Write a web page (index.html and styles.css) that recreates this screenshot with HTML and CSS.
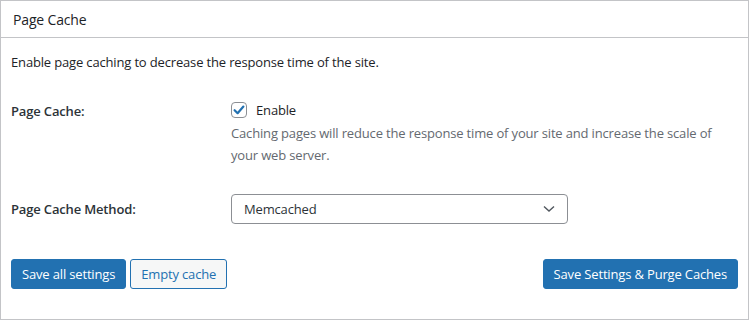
FILE: index.html
```html
<!DOCTYPE html>
<html>
<head>
<meta charset="utf-8">
<link rel="stylesheet" href="styles.css">
</head>
<body>
<div class="postbox">
  <h3 class="hndle">Page Cache</h3>
  <div class="inside">
    <p class="intro">Enable page caching to decrease the response time of the site.</p>
    <div class="row row-cache">
      <div class="label">Page Cache:</div>
      <div class="field">
        <label class="check">
          <span class="box">
            <svg width="16" height="16" viewBox="0 0 16 16"><path d="M3.6 8.2 L6.6 11.2 L12.4 4.6" fill="none" stroke="#2271b1" stroke-width="2.2" stroke-linecap="round" stroke-linejoin="round"/></svg>
          </span>
          <span>Enable</span>
        </label>
        <p class="desc">Caching pages will reduce the response time of your site and increase the scale of your web server.</p>
      </div>
    </div>
    <div class="row row-method">
      <div class="label">Page Cache Method:</div>
      <div class="field">
        <div class="select">
          <span>Memcached</span>
          <svg width="12" height="8" viewBox="0 0 12 8"><path d="M1 1.5 L6 6 L11 1.5" fill="none" stroke="#50575e" stroke-width="1.4"/></svg>
        </div>
      </div>
    </div>
    <div class="actions">
      <div class="left">
        <button class="btn primary">Save all settings</button>
        <button class="btn secondary">Empty cache</button>
      </div>
      <button class="btn primary">Save Settings &amp; Purge Caches</button>
    </div>
  </div>
</div>
</body>
</html>
```

FILE: styles.css
```css
* { box-sizing: border-box; }
html, body { margin: 0; padding: 0; background: #fff; }
body {
  font-family: "Open Sans", "Noto Sans", sans-serif;
  font-size: 13px;
  letter-spacing: -0.16px;
  color: #1d2327;
}
.postbox {
  width: 749px;
  height: 320px;
  border: 1px solid #c3c4c7;
  background: #fff;
}
.hndle {
  margin: 0;
  height: 37px;
  padding: 0 12px;
  display: flex;
  align-items: center;
  font-size: 14px;
  font-weight: 400;
  border-bottom: 1px solid #c3c4c7;
}
.inside { padding: 0 10px 0 10px; }
.intro { margin: 14px 0 0 0; line-height: 20px; }
.row { display: flex; }
.label { width: 220px; font-weight: 600; line-height: 20px; color: #2c3338; }
.field { flex: 1; }
.row-cache { margin-top: 28px; }
.row-cache .label { padding-top: 1px; }
.check { display: flex; align-items: center; gap: 9px; line-height: 20px; }
.box {
  width: 16px; height: 16px;
  border: 1px solid #8c8f94;
  border-radius: 4px;
  display: flex; align-items: center; justify-content: center;
}
.box svg { display: block; flex: none; }
.desc { margin: 2px 0 0 0; color: #646970; line-height: 22px; }
.row-method { margin-top: 28px; align-items: center; }
.select {
  width: 337px; height: 30px;
  border: 1px solid #8c8f94;
  border-radius: 4px;
  display: flex; align-items: center; justify-content: space-between;
  padding: 0 12px 0 12px;
  color: #2c3338;
}
.actions { margin-top: 35px; display: flex; justify-content: space-between; }
.left { display: flex; gap: 4px; }
.btn {
  font-family: inherit;
  font-size: 13px;
  letter-spacing: -0.16px;
  height: 30px;
  padding: 0 10px;
  border-radius: 3px;
  border: 1px solid #2271b1;
  cursor: pointer;
}
.primary { background: #2271b1; color: #fff; }
.secondary { background: #f6f7f7; color: #2271b1; }
```
